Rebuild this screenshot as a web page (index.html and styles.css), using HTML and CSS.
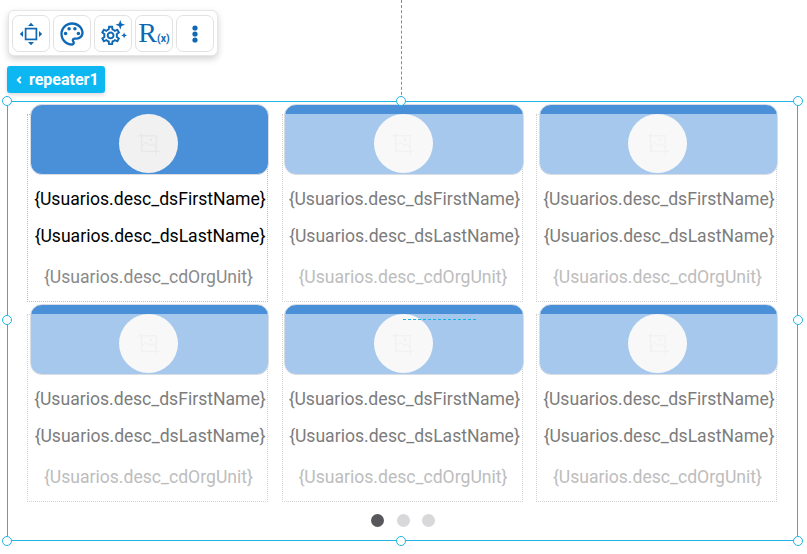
FILE: index.html
```html
<!DOCTYPE html>
<html lang="es">
<head>
<meta charset="utf-8">
<title>repeater1</title>
<link rel="stylesheet" href="styles.css">
</head>
<body>
<div class="guide-v"></div>
<div class="toolbar">
  <button class="tool"><svg viewBox="0 0 24 24" width="24" height="24"><rect x="6.6" y="6.6" width="10.8" height="10.8" fill="none" stroke="#0f68b4" stroke-width="1.7"/><path d="M12 .8l3 3.2H9zM12 23.2L9 20h6zM.8 12L4 9v6zM23.2 12L20 15V9z" fill="#0f68b4"/></svg></button>
  <button class="tool"><svg viewBox="0 0 24 24" width="28" height="28" fill="#0f68b4"><path d="M12 22C6.49 22 2 17.51 2 12S6.49 2 12 2s10 4.04 10 9c0 3.31-2.69 6-6 6h-1.77c-.28 0-.5.22-.5.5 0 .12.05.23.13.33.41.47.64 1.06.64 1.67 0 1.38-1.12 2.5-2.5 2.5zm0-18c-4.41 0-8 3.59-8 8s3.59 8 8 8c.28 0 .5-.22.5-.5 0-.16-.08-.28-.14-.35-.41-.46-.63-1.05-.63-1.65 0-1.38 1.12-2.5 2.5-2.5H16c2.21 0 4-1.79 4-4 0-3.86-3.59-7-8-7z"/><circle cx="6.5" cy="11.5" r="1.5"/><circle cx="9.5" cy="7.5" r="1.5"/><circle cx="14.5" cy="7.5" r="1.5"/><circle cx="17.5" cy="11.5" r="1.5"/></svg></button>
  <button class="tool"><svg viewBox="0 0 30 30" width="29" height="29" fill="#0f68b4"><g transform="translate(0 5)"><path d="M19.43 12.98c.04-.32.07-.64.07-.98 0-.34-.03-.66-.07-.98l2.11-1.65c.19-.15.24-.42.12-.64l-2-3.46c-.09-.16-.26-.25-.44-.25-.06 0-.12.01-.17.03l-2.49 1c-.52-.4-1.08-.73-1.69-.98l-.38-2.65C14.46 2.18 14.25 2 14 2h-4c-.25 0-.46.18-.49.42l-.38 2.65c-.61.25-1.17.59-1.69.98l-2.49-1c-.06-.02-.12-.03-.18-.03-.17 0-.34.09-.43.25l-2 3.46c-.13.22-.07.49.12.64l2.11 1.65c-.04.32-.07.65-.07.98 0 .33.03.66.07.98l-2.11 1.65c-.19.15-.24.42-.12.64l2 3.46c.09.16.26.25.44.25.06 0 .12-.01.17-.03l2.49-1c.52.4 1.08.73 1.69.98l.38 2.65c.03.24.24.42.49.42h4c.25 0 .46-.18.49-.42l.38-2.65c.61-.25 1.17-.59 1.69-.98l2.49 1c.06.02.12.03.18.03.17 0 .34-.09.43-.25l2-3.46c.12-.22.07-.49-.12-.64l-2.11-1.65zm-1.98-1.71c.04.31.05.52.05.73 0 .21-.02.43-.05.73l-.14 1.13.89.7 1.08.84-.7 1.21-1.27-.51-1.04-.42-.9.68c-.43.32-.84.56-1.25.73l-1.06.43-.16 1.13-.2 1.35h-1.4l-.19-1.35-.16-1.13-1.06-.43c-.43-.18-.83-.41-1.23-.71l-.91-.7-1.06.43-1.27.51-.7-1.21 1.08-.84.89-.7-.14-1.13c-.03-.31-.05-.54-.05-.74s.02-.43.05-.73l.14-1.13-.89-.7-1.08-.84.7-1.21 1.27.51 1.04.42.9-.68c.43-.32.84-.56 1.25-.73l1.06-.43.16-1.13.2-1.35h1.39l.19 1.35.16 1.13 1.06.43c.43.18.83.41 1.23.71l.91.7 1.06-.43 1.27-.51.7 1.21-1.07.85-.89.7.14 1.13zM12 8c-2.21 0-4 1.79-4 4s1.79 4 4 4 4-1.79 4-4-1.79-4-4-4zm0 6c-1.1 0-2-.9-2-2s.9-2 2-2 2 .9 2 2-.9 2-2 2z"/></g><path d="M22 1l1.3 3.7L27 6l-3.7 1.3L22 11l-1.3-3.7L17 6l3.7-1.3zM26 14l.9 2.1 2.1.9-2.1.9-.9 2.1-.9-2.1-2.1-.9 2.1-.9z"/></svg></button>
  <button class="tool formula"><span class="formula-r">R</span><span class="formula-x">(x)</span></button>
  <button class="tool"><svg viewBox="0 0 24 24" width="24" height="24" fill="#0f68b4"><circle cx="12" cy="6" r="2.6"/><circle cx="12" cy="12" r="2.6"/><circle cx="12" cy="18" r="2.6"/></svg></button>
</div>
<div class="tag"><svg class="tag-chevron" viewBox="0 0 6 8" width="6" height="8"><path d="M4.8 1L1.8 4l3 3" fill="none" stroke="#fff" stroke-width="1.8"/></svg><span>repeater1</span></div>

<section class="repeater">
  <div class="grid">
    <article class="card card-active">
      <div class="band"><div class="avatar"><svg class="ph" viewBox="0 0 24 24" width="22" height="22"><path d="M0 3h20M4 0v20M4 20h20M20 3v21" fill="none" stroke="currentColor"/><path d="M4 15l5-5 4 4 3-2 4 4" fill="none" stroke="currentColor"/><circle cx="14" cy="7.5" r="1.2" fill="currentColor"/></svg></div></div>
      <p class="line">{Usuarios.desc_dsFirstName}</p>
      <p class="line">{Usuarios.desc_dsLastName}</p>
      <p class="org">{Usuarios.desc_cdOrgUnit}</p>
    </article>
    <article class="card">
      <div class="band"><div class="avatar"><svg class="ph" viewBox="0 0 24 24" width="22" height="22"><path d="M0 3h20M4 0v20M4 20h20M20 3v21" fill="none" stroke="currentColor"/><path d="M4 15l5-5 4 4 3-2 4 4" fill="none" stroke="currentColor"/><circle cx="14" cy="7.5" r="1.2" fill="currentColor"/></svg></div></div>
      <p class="line">{Usuarios.desc_dsFirstName}</p>
      <p class="line">{Usuarios.desc_dsLastName}</p>
      <p class="org">{Usuarios.desc_cdOrgUnit}</p>
    </article>
    <article class="card">
      <div class="band"><div class="avatar"><svg class="ph" viewBox="0 0 24 24" width="22" height="22"><path d="M0 3h20M4 0v20M4 20h20M20 3v21" fill="none" stroke="currentColor"/><path d="M4 15l5-5 4 4 3-2 4 4" fill="none" stroke="currentColor"/><circle cx="14" cy="7.5" r="1.2" fill="currentColor"/></svg></div></div>
      <p class="line">{Usuarios.desc_dsFirstName}</p>
      <p class="line">{Usuarios.desc_dsLastName}</p>
      <p class="org">{Usuarios.desc_cdOrgUnit}</p>
    </article>
    <article class="card">
      <div class="band"><div class="avatar"><svg class="ph" viewBox="0 0 24 24" width="22" height="22"><path d="M0 3h20M4 0v20M4 20h20M20 3v21" fill="none" stroke="currentColor"/><path d="M4 15l5-5 4 4 3-2 4 4" fill="none" stroke="currentColor"/><circle cx="14" cy="7.5" r="1.2" fill="currentColor"/></svg></div></div>
      <p class="line">{Usuarios.desc_dsFirstName}</p>
      <p class="line">{Usuarios.desc_dsLastName}</p>
      <p class="org">{Usuarios.desc_cdOrgUnit}</p>
    </article>
    <article class="card">
      <div class="band"><div class="avatar"><svg class="ph" viewBox="0 0 24 24" width="22" height="22"><path d="M0 3h20M4 0v20M4 20h20M20 3v21" fill="none" stroke="currentColor"/><path d="M4 15l5-5 4 4 3-2 4 4" fill="none" stroke="currentColor"/><circle cx="14" cy="7.5" r="1.2" fill="currentColor"/></svg></div></div>
      <p class="line">{Usuarios.desc_dsFirstName}</p>
      <p class="line">{Usuarios.desc_dsLastName}</p>
      <p class="org">{Usuarios.desc_cdOrgUnit}</p>
    </article>
    <article class="card">
      <div class="band"><div class="avatar"><svg class="ph" viewBox="0 0 24 24" width="22" height="22"><path d="M0 3h20M4 0v20M4 20h20M20 3v21" fill="none" stroke="currentColor"/><path d="M4 15l5-5 4 4 3-2 4 4" fill="none" stroke="currentColor"/><circle cx="14" cy="7.5" r="1.2" fill="currentColor"/></svg></div></div>
      <p class="line">{Usuarios.desc_dsFirstName}</p>
      <p class="line">{Usuarios.desc_dsLastName}</p>
      <p class="org">{Usuarios.desc_cdOrgUnit}</p>
    </article>
  </div>
  <div class="pager"><span class="dot dot-on"></span><span class="dot"></span><span class="dot"></span></div>
  <div class="guide-h"></div>
  <span class="handle h-tl"></span><span class="handle h-tc"></span><span class="handle h-tr"></span>
  <span class="handle h-ml"></span><span class="handle h-mr"></span>
  <span class="handle h-bl"></span><span class="handle h-bc"></span><span class="handle h-br"></span>
</section>
</body>
</html>
```
FILE: styles.css
```css
* { box-sizing: border-box; }
html, body { margin: 0; padding: 0; }
body {
  width: 807px;
  height: 554px;
  overflow: hidden;
  background: #fff;
  font-family: Roboto, "Liberation Sans", sans-serif;
  position: relative;
}
.guide-v {
  position: absolute;
  left: 401px;
  top: 0;
  height: 100px;
  border-left: 1px dashed #8a8a8a;
}
.toolbar {
  display: flex;
  gap: 3px;
  width: 210px;
  height: 46px;
  margin: 10px 0 0 8px;
  padding: 4px 3px 0 3px;
  background: #fff;
  border: 1px solid #e6e6e6;
  border-radius: 6px;
  box-shadow: 0 3px 7px rgba(0, 0, 0, .18);
}
.tool {
  flex: 1 1 0;
  height: 37px;
  padding: 0;
  display: flex;
  align-items: center;
  justify-content: center;
  background: #fff;
  border: 1px solid #e2e2e2;
  border-radius: 7px;
}
.formula { color: #0f68b4; font-family: "Liberation Serif", serif; align-items: baseline; padding-top: 2px; }
.formula-r { font-size: 28px; line-height: 30px; }
.formula-x { font-family: Roboto, sans-serif; font-size: 10.5px; font-weight: 700; }
.tag {
  display: flex;
  align-items: center;
  gap: 7px;
  width: 98px;
  height: 27px;
  margin: 10px 0 0 7px;
  padding-left: 9px;
  background: #0db8f2;
  color: #fff;
  border-radius: 3px;
  font-size: 16px;
  font-weight: 700;
  box-shadow: 0 2px 4px rgba(0, 0, 0, .15);
}
.repeater {
  position: relative;
  width: 791px;
  height: 440px;
  margin: 8px 0 0 7px;
  padding: 12px 0 0 19px;
  border: 1px solid #22b4e4;
}
.grid {
  display: grid;
  grid-template-columns: repeat(3, 241px);
  grid-auto-rows: 188px;
  column-gap: 13.5px;
  row-gap: 12px;
}
.card {
  border: 1px dotted #d2d2d2;
  text-align: center;
}
.band {
  display: flex;
  justify-content: center;
  align-items: center;
  height: 71px;
  margin: -11px -2px 0 1.9px;
  padding-top: 9px;
  border: 1px solid #d8dde3;
  border-radius: 12px;
  background: linear-gradient(#4a90d9 0 9px, #a5c8ec 9px);
}
.avatar {
  display: flex;
  justify-content: center;
  align-items: center;
  width: 59px;
  height: 59px;
  margin: -1px 0 0 -1px;
  border-radius: 50%;
  background: #f8f8f8;
  color: #efefef;
}
.line {
  margin: 0;
  height: 37px;
  padding-left: 5px;
  line-height: 37px;
  font-size: 17.6px;
  color: #7c7c7c;
  white-space: nowrap;
}
.band + .line { margin-top: 6px; }
.org {
  margin: 4px 0 0;
  padding-left: 2px;
  line-height: 37px;
  font-size: 17.6px;
  color: #bdbdbd;
  white-space: nowrap;
}
.card-active { border-color: #bdbdbd; }
.card-active .band { background: #4a90d9; }
.card-active .avatar { background: #f1f1f1; color: #e4e4e4; }
.card-active .line { color: #000; }
.card-active .org { color: #8a8a8a; }
.pager {
  display: flex;
  justify-content: center;
  gap: 12.5px;
  margin: 12px 0 0 -19px;
  padding-left: 1px;
}
.dot {
  width: 13px;
  height: 13px;
  border-radius: 50%;
  background: #d8d8da;
}
.dot-on { background: #58585c; }
.guide-h {
  position: absolute;
  left: 395px;
  top: 217px;
  width: 73px;
  border-top: 1px dashed #12b5ea;
}
.handle {
  position: absolute;
  width: 10px;
  height: 10px;
  background: #fff;
  border: 1px solid #22b4e4;
  border-radius: 50%;
}
.h-tl { left: -6px; top: -6px; }
.h-tc { left: 388px; top: -6px; }
.h-tr { right: -6px; top: -6px; }
.h-ml { left: -6px; top: 213px; }
.h-mr { right: -6px; top: 213px; }
.h-bl { left: -6px; bottom: -6px; }
.h-bc { left: 388px; bottom: -6px; }
.h-br { right: -6px; bottom: -6px; }
```
